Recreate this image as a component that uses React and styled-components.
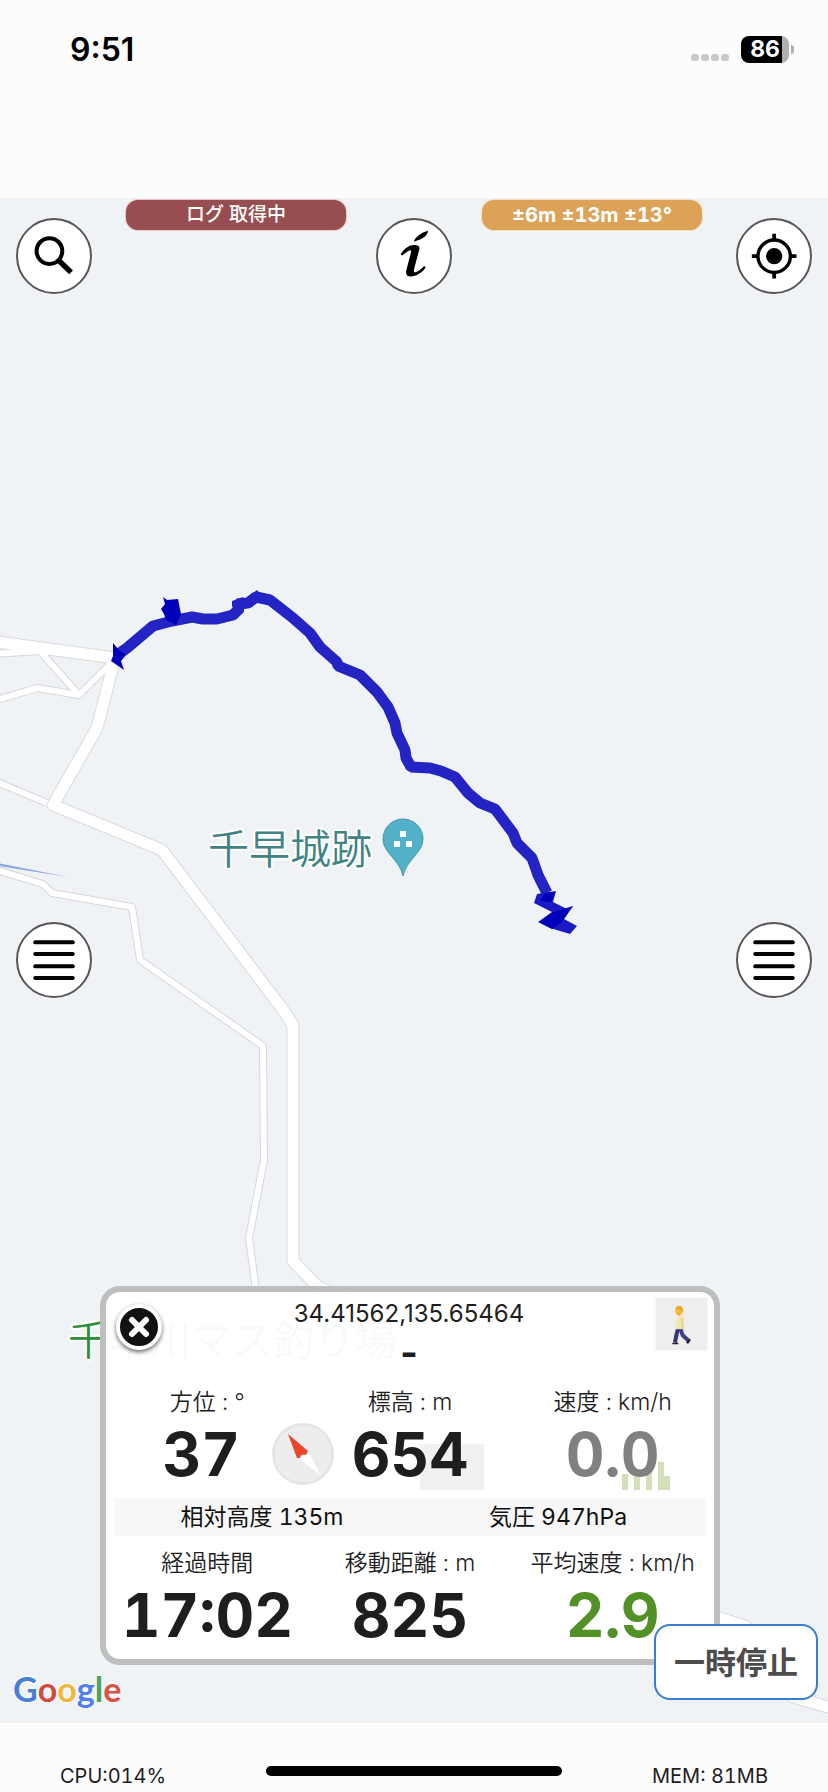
import React from "react";
import styled, { createGlobalStyle } from "styled-components";

const GlobalStyle = createGlobalStyle`
  *, *::before, *::after { box-sizing: border-box; }
  body {
    margin: 0;
    background: #fcfcfc;
    color: #1e1e1e;
    font-family: Inter, "Noto Sans CJK JP", sans-serif;
    font-variant-numeric: tabular-nums;
  }
  button { font: inherit; color: inherit; padding: 0; margin: 0; cursor: pointer; }
`;

const Screen = styled.div`
  display: flex;
  flex-direction: column;
  min-height: 100vh;
`;

/* ---------- status bar ---------- */

const StatusBar = styled.header`
  display: flex;
  justify-content: space-between;
  align-items: flex-start;
  height: 198px;
  padding: 32px 34px 0 70px;
`;

const Clock = styled.time`
  font-size: 32px;
  line-height: 36px;
  font-weight: 600;
  font-variant-numeric: normal;
  color: #000;
`;

const StatusIcons = styled.div`
  display: flex;
  align-items: center;
  gap: 12px;
  padding-top: 4px;
`;

const SignalDots = styled.div`
  display: flex;
  gap: 2px;
  padding-top: 16px;
`;

const SignalDot = styled.span`
  width: 8px;
  height: 7px;
  border-radius: 3px;
  background: #cacaca;
`;

const BatteryGroup = styled.div`
  display: flex;
  align-items: center;
  gap: 2px;
`;

const Battery = styled.div`
  width: 48px;
  height: 27px;
  border-radius: 8px;
  background: linear-gradient(to right, #000 86%, #b0b0b0 86%);
  color: #fff;
  font-size: 23px;
  font-weight: 700;
  line-height: 27px;
  text-align: center;
`;

const BatteryCap = styled.span`
  width: 3px;
  height: 9px;
  border-radius: 0 3px 3px 0;
  background: #b0b0b0;
`;

/* ---------- map ---------- */

const MapView = styled.main`
  flex: 1;
  position: relative;
  display: grid;
  background: #f0f3f6;
`;

const MapCanvas = styled.svg`
  position: absolute;
  inset: 0;
  width: 100%;
  height: 100%;
  font-family: "Noto Sans CJK JP", sans-serif;
`;

const Overlay = styled.div`
  grid-area: 1 / 1;
  position: relative;
  display: flex;
  flex-direction: column;
  justify-content: space-between;
`;

const TopControls = styled.div`
  display: grid;
  grid-template-columns: 76px 1fr 76px 1fr 76px;
  align-items: start;
  padding: 0 16px;
`;

const SideControls = styled.div`
  grid-area: 1 / 1;
  align-self: center;
  position: relative;
  z-index: 1;
  display: flex;
  justify-content: space-between;
  padding: 0 16px 2px;
`;

const RoundButton = styled.button`
  display: block;
  width: 76px;
  height: 76px;
  margin-top: ${(p) => (p.$lowered ? "20px" : "0")};
  border: 2px solid #5a5657;
  border-radius: 50%;
  background: #fff;

  svg { display: block; width: 72px; height: 72px; }
`;

const Pill = styled.div`
  width: 220px;
  max-width: 100%;
  height: 30px;
  margin-top: 2px;
  justify-self: ${(p) => p.$side};
  margin-${(p) => p.$side === "end" ? "right" : "left"}: 30px;
  border-radius: 12px;
  background: ${(p) => p.$tone};
  box-shadow: 0 0 0 1px ${(p) => p.$ring};
  color: #fff;
  font-size: ${(p) => p.$size};
  line-height: 30px;
  font-weight: ${(p) => p.$weight};
  text-align: center;
  white-space: nowrap;
`;

const GoogleMark = styled.a`
  display: flex;
  height: 58px;
  align-items: center;
  padding: 0 0 10px 13px;
  font-family: Lato, sans-serif;
  font-size: 34px;
  line-height: 40px;
  font-weight: 700;
  text-decoration: none;
  text-shadow: 0 0 3px #fff, 0 0 3px #fff;
`;

const Letter = styled.span`
  color: ${(p) => p.$color};
`;

const PauseButton = styled.button`
  position: absolute;
  right: 10px;
  bottom: 23px;
  width: 164px;
  height: 76px;
  padding-bottom: 4px;
  border: 2px solid #3b7cd4;
  border-radius: 16px;
  background: #fff;
  color: #4c4c4c;
  font-size: 31px;
  font-weight: 700;
  white-space: nowrap;
`;

/* ---------- data panel ---------- */

const Panel = styled.section`
  margin: 0 108px 0 100px;
  padding-bottom: 8px;
  border: 6px solid #bdbfbf;
  border-radius: 20px;
  background: rgba(255, 255, 255, 0.96);
`;

const PanelBottom = styled.div`
  display: flex;
  flex-direction: column;
`;

const PanelHeader = styled.div`
  display: flex;
  justify-content: space-between;
  align-items: flex-start;
  height: 95px;
  padding: 6px 7px 0 10px;
`;

const CloseButton = styled.button`
  width: 46px;
  height: 46px;
  margin-top: 6px;
  border: 4px solid #fff;
  border-radius: 50%;
  background: #111;
  box-shadow: 0 2px 4px rgba(0, 0, 0, 0.6);

  svg { display: block; width: 38px; height: 38px; }
`;

const ModeButton = styled.button`
  width: 51px;
  height: 52px;
  border: 0;
  background: #eeeeef;
  box-shadow: 0 0 3px #eeeeef;

  svg { display: block; width: 51px; height: 52px; }
`;

const Position = styled.div`
  text-align: center;
`;

const Coordinates = styled.div`
  font-size: 24px;
  line-height: 32px;
  font-variant-numeric: normal;
`;

const PlaceName = styled.div`
  font-size: 38px;
  line-height: 44px;
  font-weight: 700;
`;

const MetricRow = styled.div`
  display: grid;
  grid-template-columns: repeat(3, 1fr);
`;

const Metric = styled.div`
  position: relative;
  text-align: center;
  white-space: nowrap;
`;

const MetricLabel = styled.div`
  font-size: 23px;
  line-height: 30px;
  font-weight: 350;
`;

const MetricValue = styled.div`
  position: relative;
  padding: 1px ${(p) => (p.$shared ? "12px" : "0")} 0 0;
  font-size: 60px;
  line-height: 72px;
  font-weight: 700;
  color: ${(p) => p.$color || "#1e1e1e"};
`;

const Compass = styled.svg`
  position: absolute;
  z-index: 1;
  right: -26px;
  bottom: 4px;
  width: 64px;
  height: 64px;
`;

const AltitudeTrace = styled.span`
  position: absolute;
  right: 27px;
  bottom: 0;
  width: 64px;
  height: 46px;
  background: #f1f1f1;
`;

const SpeedTrace = styled.svg`
  position: absolute;
  right: 44px;
  bottom: 0;
  width: 48px;
  height: 28px;
`;

const SubStrip = styled.div`
  display: grid;
  grid-template-columns: 1fr 1fr;
  margin: 8px 8px 12px;
  background: #f7f7f7;
  color: #111;
  font-size: 23px;
  line-height: 38px;
  text-align: center;
  white-space: nowrap;
`;

/* ---------- footer ---------- */

const Footer = styled.footer`
  display: grid;
  grid-template-columns: 1fr 296px 1fr;
  align-items: end;
  height: 69px;
  padding: 0 60px 4px;
  font-size: 20px;
  line-height: 24px;
`;

const HomeIndicator = styled.span`
  height: 10px;
  margin-bottom: 12px;
  border-radius: 5px;
  background: #000;
`;

const Memory = styled.span`
  text-align: right;
`;

/* ---------- drawings ---------- */

const majorRoads = [
  "M-10 641 L115 658 L97 728 L53 805 L162 850 L281 1007 L293 1025 L293 1261 L317 1286 L440 1345 L510 1360 L540 1400 L540 1470 L620 1500 L630 1590 L700 1612 L745 1626 L793 1697 L838 1710",
];

const minorRoads = [
  "M-10 654 L40 651 L79 695 L113 661",
  "M-10 702 L37 688 L79 695",
  "M-10 779 L47 803",
  "M-10 868 L43 884 L52 893 L132 907 L140 960 L263 1046 L264 1160 L249 1238 L256 1290",
];

const track =
  "M117 655 L127 648 L153 626 L172 621 L192 617 L203 619 L217 619 L233 615 L240 608 L237 604 L248 603 L256 597 L270 600 L293 618 L310 633 L320 647 L337 662 L338 666 L360 675 L377 692 L388 707 L395 723 L397 733 L405 750 L406 758 L411 767 L430 768 L441 771 L455 777 L468 793 L480 803 L495 809 L513 833 L517 843 L532 858 L538 875 L547 893";

function MapDrawing() {
  return (
    <MapCanvas viewBox="0 198 828 1525" preserveAspectRatio="xMidYMid slice">
      <path d="M-2 863 L68 877 L-2 866 Z" fill="#8ba9e0" />
      <g fill="none" strokeLinejoin="round">
        {minorRoads.map((d) => (
          <path key={d} d={d} stroke="#d8d6dc" strokeWidth="8" />
        ))}
        {majorRoads.map((d) => (
          <path key={d} d={d} stroke="#dbd9df" strokeWidth="13" />
        ))}
        {minorRoads.map((d) => (
          <path key={d} d={d} stroke="#fff" strokeWidth="6" />
        ))}
        {majorRoads.map((d) => (
          <path key={d} d={d} stroke="#fff" strokeWidth="11" />
        ))}
      </g>

      <path d={track} fill="none" stroke="#2424c4" strokeWidth="11" strokeLinejoin="bevel" />
      <path d="M232 601 L243 597 L246 608 L236 612 L232 606 Z M249 596 L257 590 L262 596 Z" fill="#2424c4" />
      <path d="M163 597 L167 600 L178 599 L181 614 L176 625 L166 620 L164 614 L161 609 L165 604 Z" fill="#0000b8" />
      <path d="M113 643 L119 650 L126 655 L121 661 L124 670 L111 661 L113 656 Z" fill="#0000b8" />
      <g fill="#1a1ac4">
        <path d="M537 894 L556 891 L553 902 L567 909 L573 906 L564 919 L577 926 L570 934 L550 928 L538 922 L552 912 L534 903 Z" />
        <path d="M540 901 L545 893 L555 892 L551 902 Z M551 913 L573 906 L561 923 L552 929 L539 922 Z" fill="#0000b8" />
      </g>

      <g fontSize="41" fontWeight="350" stroke="#fff" strokeWidth="4" strokeLinejoin="round" paintOrder="stroke">
        <text x="208" y="864" fill="#3f8385">千早城跡</text>
        <text x="68" y="1355" fill="#2f8d3c">千早川マス釣り場</text>
      </g>

      <path
        d="M403 876 C400 860 383 853 383 839 A20 20 0 0 1 423 839 C423 853 406 860 403 876 Z"
        fill="#52b0c8"
        stroke="#4597a8"
        strokeWidth="1"
      />
      <path d="M400 831h6v6h-6z M394 841h6v6h-6z M406 841h6v6h-6z" fill="#fff" />
    </MapCanvas>
  );
}

function SearchGlyph() {
  return (
    <svg viewBox="6 6 213 213" fill="none" stroke="#000">
      <circle cx="99" cy="98" r="38" strokeWidth="12" />
      <path d="M126 125 L163 161" strokeWidth="16" />
    </svg>
  );
}

function InfoGlyph() {
  return (
    <svg viewBox="6 6 213 213" fill="#000">
      <path d="M73 107 C85 88 100 80 112 80 C126 80 130 84 128 94 L113 150 C111 160 114 162 119 160 C130 156 138 146 143 142 L147 146 C138 162 118 173 104 173 C92 173 87 168 90 154 L103 104 C105 96 103 94 99 96 C92 99 84 106 77 111 Z" />
      <path d="M112 70 C116 58 130 45 154 38 C153 52 140 62 112 70 Z" />
    </svg>
  );
}

function TargetGlyph() {
  return (
    <svg viewBox="6 6 213 213" fill="none" stroke="#000">
      <circle cx="113" cy="113" r="48" strokeWidth="10" />
      <circle cx="113" cy="113" r="24" fill="#000" stroke="none" />
      <path d="M113 47 V66 M113 160 V179 M47 113 H66 M160 113 H179" strokeWidth="11" />
    </svg>
  );
}

function MenuGlyph() {
  return (
    <svg viewBox="6 6 213 213" stroke="#000" strokeWidth="12" strokeLinecap="round">
      <path d="M57 60 H168 M57 95 H168 M57 131 H168 M57 166 H168" />
    </svg>
  );
}

function WalkerGlyph() {
  return (
    <svg viewBox="0 0 153 156">
      <path d="M66 92 L61 112 L57 134" fill="none" stroke="#34367a" strokeWidth="12" />
      <path d="M73 92 L80 112 L98 128" fill="none" stroke="#3b3d86" strokeWidth="12" strokeLinejoin="round" />
      <path d="M49 134 h18 v5 h-18 z M90 133 L101 122 L105 126 L96 138 Z" fill="#26232b" />
      <path d="M65 50 Q80 44 84 58 L86 93 L60 94 Q62 68 65 50 Z" fill="#f0e7b4" />
      <path d="M77 60 L79 84 L83 97" fill="none" stroke="#d8cb90" strokeWidth="4" />
      <path d="M67 64 L54 83" stroke="#f0e7b4" strokeWidth="4" strokeLinecap="round" />
      <circle cx="69" cy="38" r="12" fill="#f6bd3e" />
      <path d="M58 32 Q62 21 73 24 Q83 28 81 40 L76 43 Q75 33 58 32 Z" fill="#e9a72c" />
      <path d="M60 40 Q65 50 74 47 L73 52 L66 51 Z" fill="#ec8e35" />
    </svg>
  );
}

const googleLetters = [
  ["G", "#4a7fd6"],
  ["o", "#d14a3f"],
  ["o", "#edb83d"],
  ["g", "#4f7ff0"],
  ["l", "#4ea35a"],
  ["e", "#dc5146"],
];

export default function App() {
  return (
    <Screen>
      <GlobalStyle />
      <StatusBar>
        <Clock>9:51</Clock>
        <StatusIcons>
          <SignalDots>
            <SignalDot />
            <SignalDot />
            <SignalDot />
            <SignalDot />
          </SignalDots>
          <BatteryGroup>
            <Battery>86</Battery>
            <BatteryCap />
          </BatteryGroup>
        </StatusIcons>
      </StatusBar>

      <MapView>
        <MapDrawing />
        <Overlay>
          <TopControls>
            <RoundButton $lowered aria-label="検索"><SearchGlyph /></RoundButton>
            <Pill $side="end" $tone="#974e50" $ring="#f0c9c6" $size="19px" $weight="500">ログ 取得中</Pill>
            <RoundButton $lowered aria-label="情報"><InfoGlyph /></RoundButton>
            <Pill $side="start" $tone="#dca258" $ring="#f3dfc4" $size="20px" $weight="700">±6m ±13m ±13°</Pill>
            <RoundButton $lowered aria-label="現在地"><TargetGlyph /></RoundButton>
          </TopControls>

          <PanelBottom>
            <Panel>
              <PanelHeader>
                <CloseButton aria-label="閉じる">
                  <svg viewBox="0 0 38 38" stroke="#fff" strokeWidth="6" strokeLinecap="round">
                    <path d="M12 12 L26 26 M26 12 L12 26" />
                  </svg>
                </CloseButton>
                <Position>
                  <Coordinates>34.41562,135.65464</Coordinates>
                  <PlaceName>-</PlaceName>
                </Position>
                <ModeButton aria-label="徒歩"><WalkerGlyph /></ModeButton>
              </PanelHeader>

              <MetricRow>
                <Metric>
                  <MetricLabel>方位 : °</MetricLabel>
                  <MetricValue $shared>37</MetricValue>
                  <Compass viewBox="0 0 64 64">
                    <circle cx="32" cy="32" r="31" fill="#e6e6e6" />
                    <circle cx="32" cy="32" r="29" fill="#ededed" stroke="#e3e3e3" />
                    <path d="M37 29 L50 54 L27 35 Z" fill="#fff" />
                    <path d="M17 12 L37 29 L35 33 A4 4 0 0 0 29 36 L26 36 Z" fill="#e9452c" />
                  </Compass>
                </Metric>
                <Metric>
                  <AltitudeTrace />
                  <MetricLabel>標高 : m</MetricLabel>
                  <MetricValue>654</MetricValue>
                </Metric>
                <Metric>
                  <SpeedTrace viewBox="0 0 48 28">
                    <path d="M0 12h6v16h-6z M12 9h6v19h-6z M24 8h6v20h-6z M36 0h6v14h6v14h-12z" fill="#d4dfba" />
                  </SpeedTrace>
                  <MetricLabel>速度 : km/h</MetricLabel>
                  <MetricValue $color="#808080">0.0</MetricValue>
                </Metric>
              </MetricRow>

              <SubStrip>
                <span>相対高度 135m</span>
                <span>気圧 947hPa</span>
              </SubStrip>

              <MetricRow>
                <Metric>
                  <MetricLabel>経過時間</MetricLabel>
                  <MetricValue>17:02</MetricValue>
                </Metric>
                <Metric>
                  <MetricLabel>移動距離 : m</MetricLabel>
                  <MetricValue>825</MetricValue>
                </Metric>
                <Metric>
                  <MetricLabel>平均速度 : km/h</MetricLabel>
                  <MetricValue $color="#519128">2.9</MetricValue>
                </Metric>
              </MetricRow>
            </Panel>

            <GoogleMark href="#google" aria-label="Google">
              {googleLetters.map(([char, color], i) => (
                <Letter key={i} $color={color}>{char}</Letter>
              ))}
            </GoogleMark>
          </PanelBottom>

          <PauseButton>一時停止</PauseButton>
        </Overlay>

        <SideControls>
          <RoundButton aria-label="左メニュー"><MenuGlyph /></RoundButton>
          <RoundButton aria-label="右メニュー"><MenuGlyph /></RoundButton>
        </SideControls>
      </MapView>

      <Footer>
        <span>CPU:014%</span>
        <HomeIndicator />
        <Memory>MEM: 81MB</Memory>
      </Footer>
    </Screen>
  );
}
